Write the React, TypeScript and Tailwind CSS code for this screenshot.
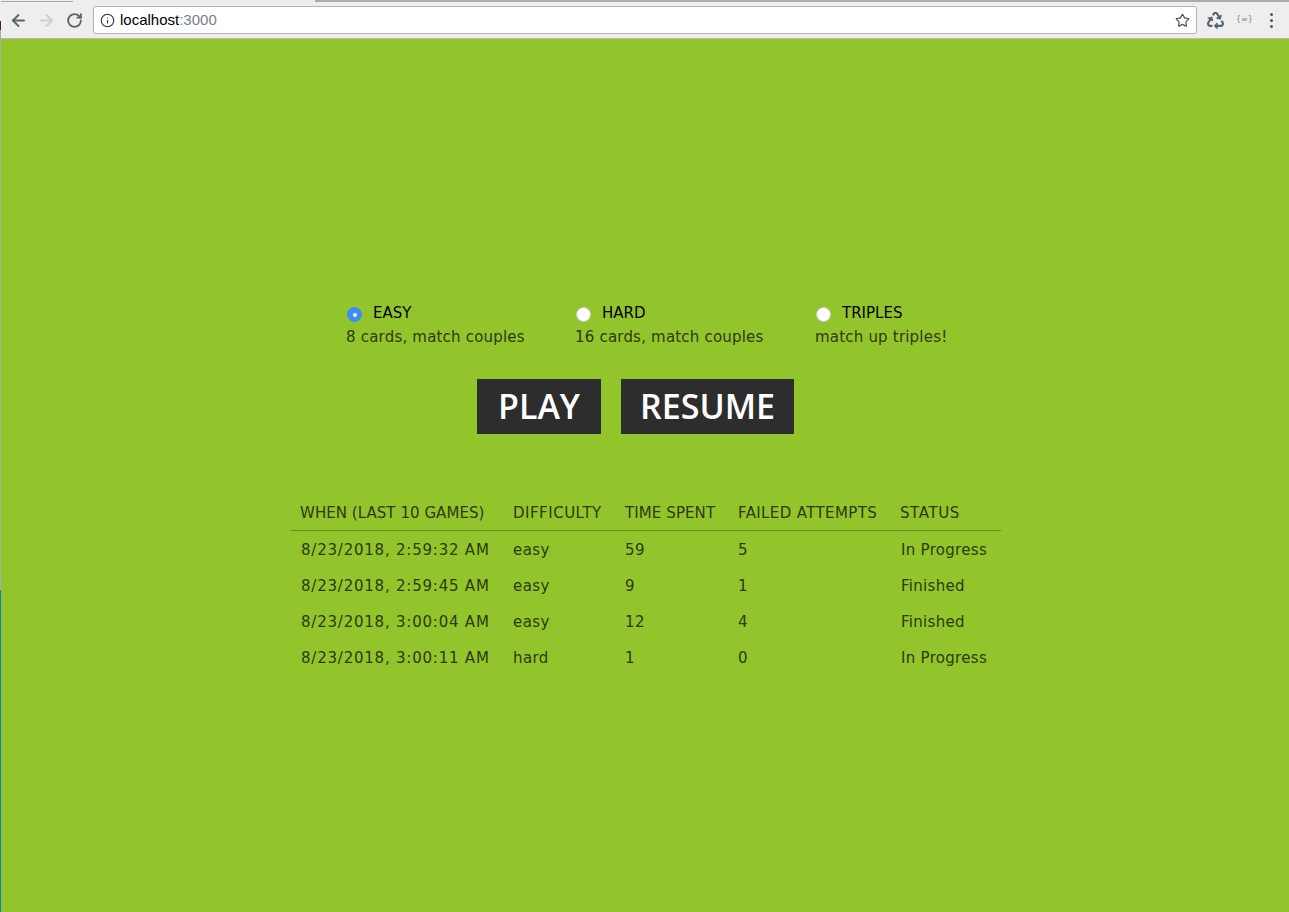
import { ArrowLeft, ArrowRight, Info, RotateCw, Star } from "lucide-react";
import { FaRecycle } from "react-icons/fa";

const modes = [
  { name: "EASY", hint: "8 cards, match couples", checked: true, width: "w-[229px]" },
  { name: "HARD", hint: "16 cards, match couples", checked: false, width: "w-[240px]" },
  { name: "TRIPLES", hint: "match up triples!", checked: false, width: "w-[140px]" },
];

const games = [
  { when: "8/23/2018, 2:59:32 AM", difficulty: "easy", time: 59, failed: 5, status: "In Progress" },
  { when: "8/23/2018, 2:59:45 AM", difficulty: "easy", time: 9, failed: 1, status: "Finished" },
  { when: "8/23/2018, 3:00:04 AM", difficulty: "easy", time: 12, failed: 4, status: "Finished" },
  { when: "8/23/2018, 3:00:11 AM", difficulty: "hard", time: 1, failed: 0, status: "In Progress" },
];

const headers = [
  { label: "WHEN (LAST 10 GAMES)", className: "w-[213px] tracking-[0.05px]" },
  { label: "DIFFICULTY", className: "w-[112px] tracking-[0.5px]" },
  { label: "TIME SPENT", className: "w-[113px] tracking-[0.1px]" },
  { label: "FAILED ATTEMPTS", className: "w-[162px] tracking-[0.38px]" },
  { label: "STATUS", className: "w-[110px] tracking-[0.6px]" },
];

function BrowserBar() {
  return (
    <div className="h-[39px] bg-[#eeeeee] border-b border-[#b9b9b9] flex flex-col font-['Liberation_Sans',sans-serif]">
      {/* tab strip edge */}
      <div className="h-[2px] flex">
        <div className="w-[72px] h-[2px] border-b border-[#a9a99a]" />
        <div className="w-[242px]" />
        <div className="flex-1 h-[2px] bg-[#b0aab0]" />
      </div>
      <div className="h-[36px] flex items-center pl-[8px] pr-[10px]">
        <ArrowLeft size={19} strokeWidth={2.4} className="text-[#5f6368]" />
        <ArrowRight size={19} strokeWidth={2.4} className="ml-[9px] text-[#d0d0d0]" />
        <RotateCw size={17} strokeWidth={2.6} className="ml-[10px] text-[#5f6368]" />
        <div className="ml-[10px] h-[28px] w-[1104px] bg-white border border-[#b5b5b5] rounded-[3px] flex items-center pl-[6px] pr-[6px]">
          <Info size={15} strokeWidth={1.8} className="text-[#333333]" />
          <span className="ml-[5px] text-[15px] text-black">
            localhost<span className="text-[#777f88]">:3000</span>
          </span>
          <Star size={15} strokeWidth={2} className="ml-auto text-[#555555]" />
        </div>
        <FaRecycle size={17} className="ml-[10px] text-[#56636e]" />
        <span className="ml-[12px] text-[8px] text-[#888888] font-['DejaVu_Sans',sans-serif]">{"{≡}"}</span>
        <div className="ml-[17px] flex flex-col gap-[3px]">
          <span className="w-[3px] h-[3px] rounded-full bg-[#555555]" />
          <span className="w-[3px] h-[3px] rounded-full bg-[#555555]" />
          <span className="w-[3px] h-[3px] rounded-full bg-[#555555]" />
        </div>
      </div>
    </div>
  );
}

export default function App() {
  return (
    <div className="h-[912px] overflow-hidden flex bg-[#92c52b] font-['DejaVu_Sans',sans-serif]">
      {/* window behind shows through on the left edge */}
      <div className="w-[1px] flex flex-col">
        <div className="h-[21px] bg-[#eeeeee]" />
        <div className="h-[9px] bg-[#5a1a1a]" />
        <div className="h-[560px] bg-[#a9b0a0]" />
        <div className="flex-1 bg-[#1476d6]" />
      </div>

      <div className="flex-1">
        <BrowserBar />

        <main className="flex flex-col items-center pt-[263px] pl-[2px]">
          <div className="flex pl-[9px]">
            {modes.map((mode) => (
              <label key={mode.name} className={mode.width + " block"}>
                <div className="flex items-center h-[22px]">
                  {mode.checked ? (
                    <span className="mt-[3px] ml-[1px] w-[15px] h-[15px] rounded-full bg-[#3b8df2] flex items-center justify-center">
                      <span className="w-[4px] h-[4px] rounded-full bg-white" />
                    </span>
                  ) : (
                    <span className="mt-[3px] ml-[1px] w-[15px] h-[15px] rounded-full bg-white border border-[#c5c5c5]" />
                  )}
                  <span className="ml-[11px] text-[15px] text-black">{mode.name}</span>
                </div>
                <div className="mt-[2px] text-[15px] leading-[22px] tracking-[0.2px] text-[#2c3a0c]">{mode.hint}</div>
              </label>
            ))}
          </div>

          <div className="mt-[31px] mr-[21px] flex gap-[20px] font-['Open_Sans',sans-serif] font-semibold">
            <button className="h-[55px] w-[124px] bg-[#2d2d2d] text-white text-[34px]">PLAY</button>
            <button className="h-[55px] w-[173px] bg-[#2d2d2d] text-white text-[34px]">RESUME</button>
          </div>

          <table className="mt-[60px] w-[710px] table-fixed text-[15px] text-[#2c3a0c]">
            <thead>
              <tr className="border-b border-[#6a8f24]">
                {headers.map((h) => (
                  <th key={h.label} className={h.className + " h-[36px] pt-[2px] pl-[9px] text-left font-normal"}>
                    {h.label}
                  </th>
                ))}
              </tr>
            </thead>
            <tbody className="tracking-[0.4px]">
              {games.map((game) => (
                <tr key={game.when} className="h-[36px]">
                  <td className="pt-[4px] pl-[10px] tracking-[0.78px]">{game.when}</td>
                  <td className="pt-[4px] pl-[9px]">{game.difficulty}</td>
                  <td className="pt-[4px] pl-[9px]">{game.time}</td>
                  <td className="pt-[4px] pl-[9px]">{game.failed}</td>
                  <td className="pt-[4px] pl-[10px] tracking-[0.3px]">{game.status}</td>
                </tr>
              ))}
            </tbody>
          </table>
        </main>
      </div>
    </div>
  );
}
